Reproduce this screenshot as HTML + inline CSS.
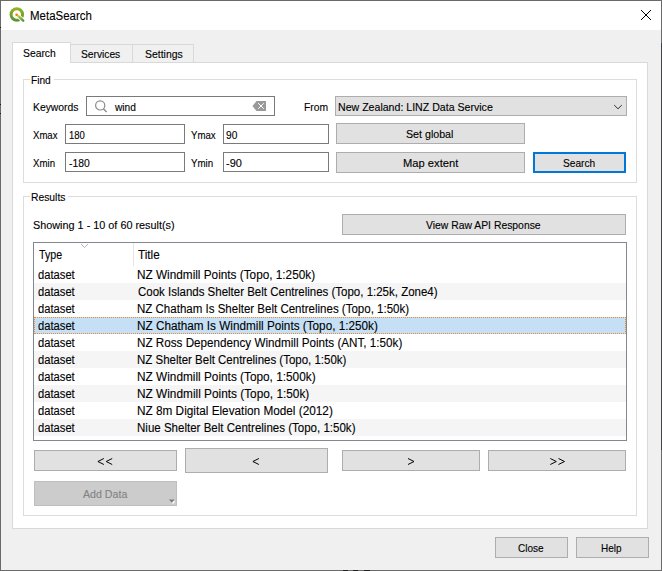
<!DOCTYPE html>
<html><head><meta charset="utf-8"><style>
*{margin:0;padding:0;box-sizing:border-box}
html,body{width:662px;height:571px;overflow:hidden;background:#f0f0f0}
body{position:relative;font-family:"Liberation Sans",sans-serif;color:#000}
.a{position:absolute}
.t{position:absolute;white-space:nowrap;line-height:1;transform-origin:0 0;-webkit-text-stroke:0.12px currentColor}
</style></head><body>
<div class="a" style="left:0px;top:0px;width:662px;height:571px;border:1px solid #6a6a6a;background:#f0f0f0"></div>
<div class="a" style="left:1px;top:1px;width:660px;height:29px;background:#fff"></div>
<svg class="a" style="left:8px;top:6px" width="18" height="18" viewBox="0 0 18 18">
<defs><linearGradient id="g" x1="0" y1="0" x2="0" y2="1"><stop offset="0" stop-color="#93b023"/><stop offset="1" stop-color="#589632"/></linearGradient>
<linearGradient id="g2" x1="0" y1="0" x2="1" y2="1"><stop offset="0" stop-color="#a8c64a"/><stop offset="1" stop-color="#589632"/></linearGradient></defs>
<circle cx="8.8" cy="8.5" r="5.75" fill="none" stroke="url(#g)" stroke-width="3"/>
<path d="M9.8 9.8 L15.2 14.6" stroke="#ffffff" stroke-width="4.2" stroke-linecap="round"/>
<path d="M10.6 10.4 L15.2 14.6" stroke="url(#g2)" stroke-width="2.5" stroke-linecap="round"/>
<circle cx="9.9" cy="9.6" r="1.1" fill="#f5d040"/>
<circle cx="8.6" cy="8.7" r="1.3" fill="#ee7913"/>
</svg>
<div class="t" style="left:29.68px;top:10px;font-size:12.5px;transform:scaleX(0.9181)">MetaSearch</div>
<svg class="a" style="left:640px;top:9px" width="12" height="12" viewBox="0 0 12 12"><path d="M1 1L11 11M11 1L1 11" stroke="#000" stroke-width="1"/></svg>
<div class="a" style="left:12px;top:62px;width:636px;height:467px;border:1px solid #d9d9d9;background:#fff"></div>
<div class="a" style="left:70px;top:44px;width:63px;height:19px;border:1px solid #d9d9d9;background:#f0f0f0"></div>
<div class="a" style="left:132px;top:44px;width:62px;height:19px;border:1px solid #d9d9d9;background:#f0f0f0"></div>
<div class="a" style="left:12px;top:42px;width:59px;height:21px;border:1px solid #d9d9d9;border-bottom:none;background:#fff"></div>
<div class="a" style="left:13px;top:62px;width:57px;height:1px;background:#fff"></div>
<div class="t" style="left:23.40px;top:48px;font-size:10.8px;transform:scaleX(0.9589)">Search</div>
<div class="t" style="left:80.60px;top:49px;font-size:10.8px;transform:scaleX(0.9476)">Services</div>
<div class="t" style="left:144.80px;top:49px;font-size:10.8px;transform:scaleX(0.9668)">Settings</div>
<div class="a" style="left:23px;top:79px;width:614px;height:104px;border:1px solid #dcdcdc"></div>
<div class="a" style="left:30px;top:76px;width:24px;height:6px;background:#fff"></div>
<div class="t" style="left:31.30px;top:75px;font-size:10.8px;transform:scaleX(0.9382)">Find</div>
<div class="t" style="left:32.80px;top:102px;font-size:10.8px;transform:scaleX(0.9603)">Keywords</div>
<div class="a" style="left:86px;top:96px;width:189px;height:20px;border:1px solid #7a7a7a;background:#fff"></div>
<svg class="a" style="left:93px;top:99px" width="16" height="16" viewBox="0 0 16 16"><circle cx="7.2" cy="6.4" r="4.6" fill="none" stroke="#8a8a8a" stroke-width="1.2"/><path d="M10.4 9.8L13.6 13" stroke="#8a8a8a" stroke-width="1.4"/></svg>
<div class="t" style="left:114.84px;top:102px;font-size:10.8px;transform:scaleX(0.9439)">wind</div>
<svg class="a" style="left:252px;top:100px" width="15" height="12" viewBox="0 0 15 12"><path d="M0.5 6L4.5 1H14V11H4.5Z" fill="#9a9a9a"/><path d="M6.2 3.2L11.8 8.8M11.8 3.2L6.2 8.8" stroke="#fff" stroke-width="1"/></svg>
<div class="t" style="left:303.90px;top:102px;font-size:10.8px;transform:scaleX(0.9565)">From</div>
<div class="a" style="left:335px;top:96px;width:292px;height:20px;border:1px solid #adadad;background:#e1e1e1"></div>
<div class="t" style="left:338.40px;top:102px;font-size:10.8px;transform:scaleX(0.9809)">New Zealand: LINZ Data Service</div>
<svg class="a" style="left:613px;top:103px" width="10" height="7" viewBox="0 0 10 7"><path d="M1.2 2.1L5 5.8L8.8 2.1" fill="none" stroke="#333" stroke-width="1"/></svg>
<div class="t" style="left:32.90px;top:130px;font-size:10.8px;transform:scaleX(0.8865)">Xmax</div>
<div class="a" style="left:65px;top:124px;width:120px;height:20px;border:1px solid #7a7a7a;background:#fff"></div>
<div class="t" style="left:68.80px;top:130px;font-size:10.8px;transform:scaleX(0.8829)">180</div>
<div class="t" style="left:190.80px;top:130px;font-size:10.8px;transform:scaleX(0.8936)">Ymax</div>
<div class="a" style="left:223px;top:124px;width:106px;height:20px;border:1px solid #7a7a7a;background:#fff"></div>
<div class="t" style="left:225.90px;top:130px;font-size:10.8px;transform:scaleX(0.9413)">90</div>
<div class="a" style="left:336px;top:123px;width:189px;height:21px;border:1px solid #adadad;background:#e1e1e1"></div>
<div class="t" style="left:406.40px;top:129px;font-size:10.8px;transform:scaleX(0.9869)">Set global</div>
<div class="t" style="left:32.90px;top:158px;font-size:10.8px;transform:scaleX(0.8945)">Xmin</div>
<div class="a" style="left:65px;top:152px;width:120px;height:20px;border:1px solid #7a7a7a;background:#fff"></div>
<div class="t" style="left:68.50px;top:158px;font-size:10.8px;transform:scaleX(0.9581)">-180</div>
<div class="t" style="left:190.80px;top:158px;font-size:10.8px;transform:scaleX(0.9027)">Ymin</div>
<div class="a" style="left:223px;top:152px;width:106px;height:20px;border:1px solid #7a7a7a;background:#fff"></div>
<div class="t" style="left:225.60px;top:158px;font-size:10.8px;transform:scaleX(1.0128)">-90</div>
<div class="a" style="left:336px;top:152px;width:189px;height:21px;border:1px solid #adadad;background:#e1e1e1"></div>
<div class="t" style="left:402.60px;top:158px;font-size:10.8px;transform:scaleX(1.0353)">Map extent</div>
<div class="a" style="left:533px;top:152px;width:93px;height:21px;border:2px solid #0078d7;background:#e1e1e1"></div>
<div class="t" style="left:562.80px;top:158px;font-size:10.8px;transform:scaleX(0.9385)">Search</div>
<div class="a" style="left:23px;top:196px;width:614px;height:320px;border:1px solid #dcdcdc"></div>
<div class="a" style="left:30px;top:192px;width:38px;height:6px;background:#fff"></div>
<div class="t" style="left:31.20px;top:192px;font-size:10.8px;transform:scaleX(0.9562)">Results</div>
<div class="t" style="left:32.80px;top:220px;font-size:10.8px;transform:scaleX(1.0040)">Showing 1 - 10 of 60 result(s)</div>
<div class="a" style="left:342px;top:214px;width:284px;height:21px;border:1px solid #adadad;background:#e1e1e1"></div>
<div class="t" style="left:425.60px;top:220px;font-size:10.8px;transform:scaleX(0.9614)">View Raw API Response</div>
<div class="a" style="left:33px;top:242px;width:594px;height:199px;border:1px solid #828790;background:#fff"></div>
<div class="a" style="left:133px;top:243px;width:1px;height:23px;background:#e5e5e5"></div>
<svg class="a" style="left:80px;top:243px" width="10" height="6" viewBox="0 0 10 6"><path d="M1 1L4.5 4.5L8 1" fill="none" stroke="#b0b0b0" stroke-width="1"/></svg>
<div class="t" style="left:38.60px;top:249px;font-size:12.5px;transform:scaleX(0.8509)">Type</div>
<div class="t" style="left:138.00px;top:249px;font-size:12.5px;transform:scaleX(0.9397)">Title</div>
<div class="a" style="left:34px;top:283px;width:592px;height:17px;background:#f5f5f5"></div>
<div class="a" style="left:34px;top:317px;width:592px;height:17px;background:#c5e0f6;border:1px dotted #f08a24"></div>
<div class="a" style="left:34px;top:351px;width:592px;height:17px;background:#f5f5f5"></div>
<div class="a" style="left:34px;top:385px;width:592px;height:17px;background:#f5f5f5"></div>
<div class="a" style="left:34px;top:419px;width:592px;height:17px;background:#f5f5f5"></div>
<div class="t" style="left:37.70px;top:269px;font-size:12.5px;transform:scaleX(0.8957)">dataset</div>
<div class="t" style="left:137.06px;top:269px;font-size:12.5px;transform:scaleX(0.9425)">NZ Windmill Points (Topo, 1:250k)</div>
<div class="t" style="left:37.70px;top:286px;font-size:12.5px;transform:scaleX(0.8957)">dataset</div>
<div class="t" style="left:137.60px;top:286px;font-size:12.5px;transform:scaleX(0.9192)">Cook Islands Shelter Belt Centrelines (Topo, 1:25k, Zone4)</div>
<div class="t" style="left:37.70px;top:303px;font-size:12.5px;transform:scaleX(0.8957)">dataset</div>
<div class="t" style="left:137.08px;top:303px;font-size:12.5px;transform:scaleX(0.9214)">NZ Chatham Is Shelter Belt Centrelines (Topo, 1:50k)</div>
<div class="t" style="left:37.70px;top:320px;font-size:12.5px;transform:scaleX(0.8957)">dataset</div>
<div class="t" style="left:137.06px;top:320px;font-size:12.5px;transform:scaleX(0.9397)">NZ Chatham Is Windmill Points (Topo, 1:250k)</div>
<div class="t" style="left:37.70px;top:337px;font-size:12.5px;transform:scaleX(0.8957)">dataset</div>
<div class="t" style="left:137.07px;top:337px;font-size:12.5px;transform:scaleX(0.9337)">NZ Ross Dependency Windmill Points (ANT, 1:50k)</div>
<div class="t" style="left:37.70px;top:354px;font-size:12.5px;transform:scaleX(0.8957)">dataset</div>
<div class="t" style="left:137.08px;top:354px;font-size:12.5px;transform:scaleX(0.9188)">NZ Shelter Belt Centrelines (Topo, 1:50k)</div>
<div class="t" style="left:37.70px;top:371px;font-size:12.5px;transform:scaleX(0.8957)">dataset</div>
<div class="t" style="left:137.05px;top:371px;font-size:12.5px;transform:scaleX(0.9452)">NZ Windmill Points (Topo, 1:500k)</div>
<div class="t" style="left:37.70px;top:388px;font-size:12.5px;transform:scaleX(0.8957)">dataset</div>
<div class="t" style="left:137.05px;top:388px;font-size:12.5px;transform:scaleX(0.9467)">NZ Windmill Points (Topo, 1:50k)</div>
<div class="t" style="left:37.70px;top:405px;font-size:12.5px;transform:scaleX(0.8957)">dataset</div>
<div class="t" style="left:137.06px;top:405px;font-size:12.5px;transform:scaleX(0.9426)">NZ 8m Digital Elevation Model (2012)</div>
<div class="t" style="left:37.70px;top:422px;font-size:12.5px;transform:scaleX(0.8957)">dataset</div>
<div class="t" style="left:137.08px;top:422px;font-size:12.5px;transform:scaleX(0.9221)">Niue Shelter Belt Centrelines (Topo, 1:50k)</div>
<div class="a" style="left:34px;top:450px;width:143px;height:21px;border:1px solid #adadad;background:#e1e1e1"></div>
<div class="a" style="left:185px;top:448px;width:143px;height:25px;border:1px solid #adadad;background:#e1e1e1"></div>
<div class="a" style="left:342px;top:450px;width:138px;height:21px;border:1px solid #adadad;background:#e1e1e1"></div>
<div class="a" style="left:488px;top:450px;width:138px;height:21px;border:1px solid #adadad;background:#e1e1e1"></div>
<svg class="a" style="left:0;top:0" width="662" height="571"><path d="M103.9 458.5L97.9 461.5L103.9 464.5M112.2 458.5L106.2 461.5L112.2 464.5M258.9 458.5L252.9 461.5L258.9 464.5M408.0 458.5L414.0 461.5L408.0 464.5M550.3 458.5L556.3 461.5L550.3 464.5M558.5 458.5L564.5 461.5L558.5 464.5" fill="none" stroke="#000" stroke-width="1"/></svg>
<div class="a" style="left:34px;top:481px;width:143px;height:25px;background:#cccccc;border:1px solid #bfbfbf"></div>
<div class="t" style="left:82.70px;top:489px;font-size:10.8px;transform:scaleX(0.9842);color:#838383">Add Data</div>
<svg class="a" style="left:168px;top:499px" width="8" height="6" viewBox="0 0 8 6"><path d="M1 0.5H6.5L3.8 3.5Z" fill="#7a7a7a"/><path d="M4.5 4.5L6.5 2.5" stroke="#fff" stroke-width="1.2"/></svg>
<div class="a" style="left:495px;top:537px;width:73px;height:21px;border:1px solid #adadad;background:#e1e1e1"></div>
<div class="t" style="left:517.60px;top:543px;font-size:10.8px;transform:scaleX(0.9276)">Close</div>
<div class="a" style="left:576px;top:537px;width:73px;height:21px;border:1px solid #adadad;background:#e1e1e1"></div>
<div class="t" style="left:601.40px;top:543px;font-size:10.8px;transform:scaleX(0.9234)">Help</div>
<div class="a" style="left:661px;top:43px;width:1px;height:407px;background:#3c434b"></div>
<div class="a" style="left:0px;top:27px;width:1px;height:1px;background:#202020"></div>
<div class="a" style="left:0px;top:104px;width:1px;height:1px;background:#151515"></div>
<div class="a" style="left:0px;top:113px;width:1px;height:1px;background:#151515"></div>
<div class="a" style="left:343px;top:570px;width:5px;height:1px;background:#202020"></div>
<div class="a" style="left:353px;top:570px;width:5px;height:1px;background:#202020"></div>
<div class="a" style="left:364px;top:570px;width:6px;height:1px;background:#202020"></div>
</body></html>
